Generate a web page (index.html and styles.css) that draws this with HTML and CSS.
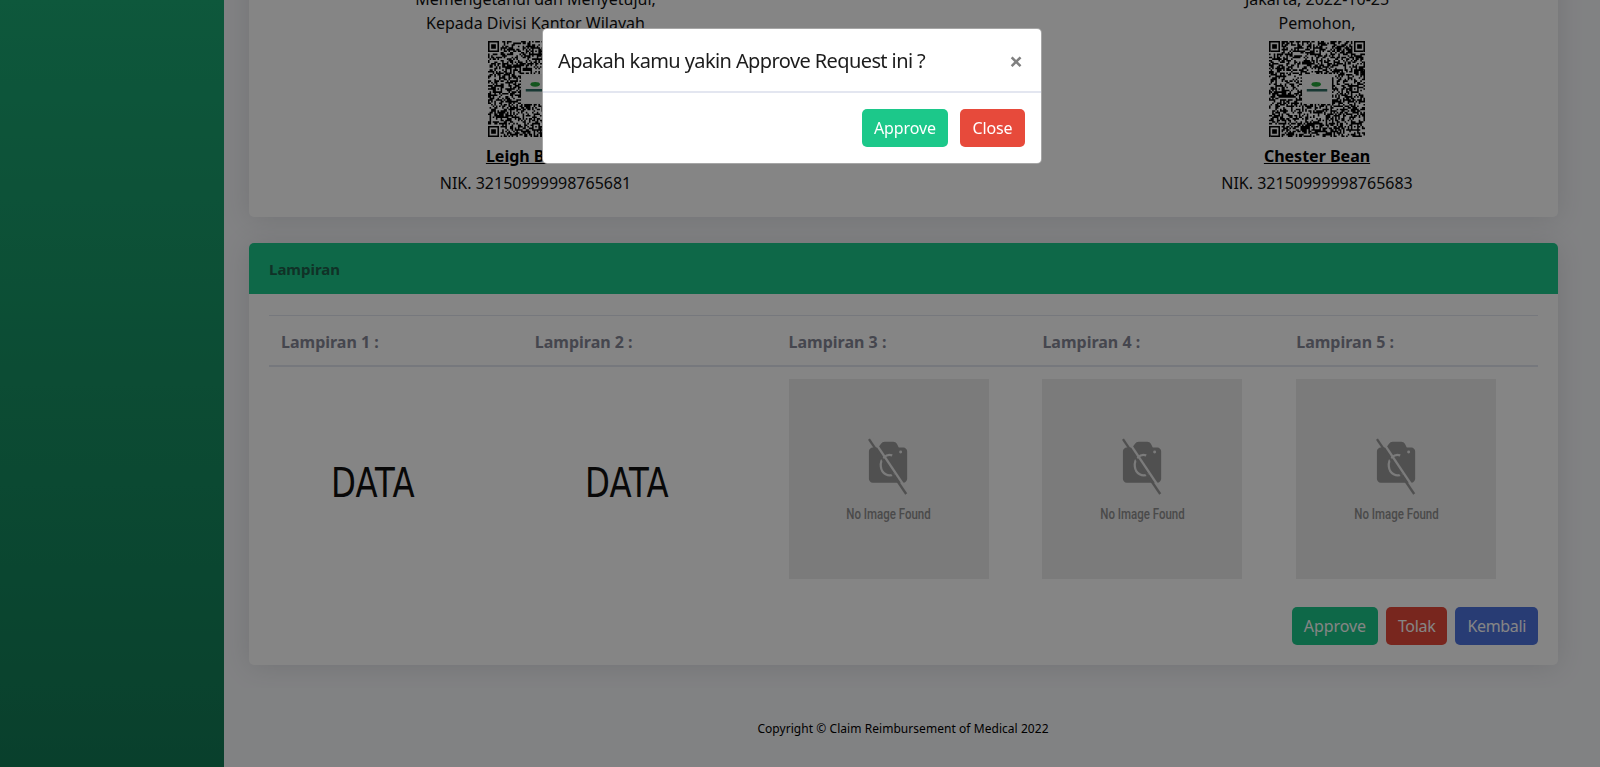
FILE: index.html
```html
<!DOCTYPE html>
<html lang="en">
  <head>
    <meta charset="UTF-8" />
    <meta name="viewport" content="width=device-width, initial-scale=1.0" />
    <link rel="stylesheet" href="styles.css">
    <title>Claim Reimbursement of Medical</title>
  </head>
  <body>
    <div class="layout">
      <aside class="sidebar"></aside>

      <div class="main">
        <div class="content">
          <section class="card">
            <div class="signatures">
              <div class="signer">
                <p>Memengetahui dan Menyetujui,</p>
                <p>Kepada Divisi Kantor Wilayah</p>
                <svg class="qr" data-seed="77"></svg>
                <p class="signer-name">Leigh Brown</p>
                <p class="signer-nik">NIK. 32150999998765681</p>
              </div>
              <div class="signer">
                <p>Jakarta, 2022-10-25</p>
                <p>Pemohon,</p>
                <svg class="qr" data-seed="4242"></svg>
                <p class="signer-name">Chester Bean</p>
                <p class="signer-nik">NIK. 32150999998765683</p>
              </div>
            </div>
          </section>

          <section class="card">
            <div class="card-header">Lampiran</div>
            <div class="card-body">
              <table class="attachments">
                <thead>
                  <tr>
                    <th>Lampiran 1 :</th>
                    <th>Lampiran 2 :</th>
                    <th>Lampiran 3 :</th>
                    <th>Lampiran 4 :</th>
                    <th>Lampiran 5 :</th>
                  </tr>
                </thead>
                <tbody>
                  <tr>
                    <td><div class="thumb"><span class="thumb-data">DATA</span></div></td>
                    <td><div class="thumb"><span class="thumb-data">DATA</span></div></td>
                    <td>
                      <div class="thumb thumb-empty">
                        <svg class="no-image-icon" viewBox="0 0 44 62"><use href="#no-image" /></svg>
                        <span class="no-image-text">No Image Found</span>
                      </div>
                    </td>
                    <td>
                      <div class="thumb thumb-empty">
                        <svg class="no-image-icon" viewBox="0 0 44 62"><use href="#no-image" /></svg>
                        <span class="no-image-text">No Image Found</span>
                      </div>
                    </td>
                    <td>
                      <div class="thumb thumb-empty">
                        <svg class="no-image-icon" viewBox="0 0 44 62"><use href="#no-image" /></svg>
                        <span class="no-image-text">No Image Found</span>
                      </div>
                    </td>
                  </tr>
                </tbody>
              </table>
              <div class="actions">
                <button class="btn btn-approve">Approve</button>
                <button class="btn btn-reject">Tolak</button>
                <button class="btn btn-back">Kembali</button>
              </div>
            </div>
          </section>
        </div>

        <footer class="footer">Copyright © Claim Reimbursement of Medical 2022</footer>
      </div>
    </div>

    <!-- approve dialog, open over a dimmed page -->
    <div class="backdrop">
      <div class="modal">
        <div class="modal-header">
          <h5 class="modal-title">Apakah kamu yakin Approve Request ini ?</h5>
          <span class="modal-close">×</span>
        </div>
        <div class="modal-footer">
          <button class="btn btn-approve">Approve</button>
          <button class="btn btn-reject">Close</button>
        </div>
      </div>
    </div>

    <svg class="icon-defs" width="0" height="0">
      <symbol id="no-image" viewBox="0 0 44 62">
        <path class="camera" d="M5 10h6l3-4c1-1 2-2 4-2h9c2 0 3 1 4 2l2 4h5c2 0 4 2 4 4v30c0 2-2 4-4 4H5c-2 0-4-2-4-4V14c0-2 2-4 4-4z" />
        <path class="camera-ring" d="M26 18.5a9.5 11 0 1 0 2 20" />
        <circle class="camera-lens" cx="35" cy="15" r="1.6" />
        <path class="camera-cut" d="M4.5 0 L44 59" />
        <path class="camera-slash" d="M1 1 L41 60" />
      </symbol>
    </svg>

    <script src="qr.js"></script>
  </body>
</html>
```

FILE: styles.css
```css
* {
  box-sizing: border-box;
}

html,
body {
  margin: 0;
  height: 767px;
  overflow: hidden;
}

body {
  font-family: "Noto Sans", Arial, sans-serif;
  font-size: 16px;
  line-height: 24px;
  color: #111;
  background-color: #f8f9fc;
}

p {
  margin: 0;
}

.layout {
  display: flex;
  height: 767px;
}

.sidebar {
  width: 224px;
  flex-shrink: 0;
  background-image: linear-gradient(180deg, #1ba973 0%, #137b55 100%);
}

.main {
  flex: 1;
  min-width: 0;
  padding-right: 18px;
  display: flex;
  flex-direction: column;
}

/* the page is scrolled down, first card starts above the window */
.content {
  height: 688px;
  flex-shrink: 0;
  overflow: hidden;
  padding: 0 24px 0 25px;
}

.card {
  background-color: #fff;
  border-radius: 5px;
  box-shadow: 0 2px 28px rgba(58, 59, 69, 0.15);
  margin-bottom: 26px;
}

.card:first-child {
  margin-top: -60px;
  padding: 47px 20px 22px;
}

.signatures {
  display: grid;
  grid-template-columns: 533px 1fr 442px;
}

.signer {
  display: flex;
  flex-direction: column;
  align-items: center;
  text-align: center;
}

.signer:last-child {
  grid-column: 3;
}

.qr {
  display: block;
  width: 96px;
  height: 96px;
  margin: 6px 0 7px;
}

.signer-name {
  font-weight: 700;
  text-decoration: underline;
  color: #000;
  margin-bottom: 3px;
}

.card-header {
  height: 51px;
  padding: 1px 20px 0;
  display: flex;
  align-items: center;
  background-color: #1cc88a;
  border-radius: 5px 5px 0 0;
  font-size: 15px;
  font-weight: 700;
  color: #20604c;
}

.card-body {
  padding: 21px 20px 20px;
}

.attachments {
  width: 100%;
  table-layout: fixed;
  border-collapse: collapse;
  margin-bottom: 16px;
}

.attachments th {
  height: 50px;
  padding: 14px 12px 10px;
  text-align: left;
  color: #858796;
  border-top: 1px solid #e3e6f0;
  border-bottom: 2px solid #e3e6f0;
}

.attachments td {
  padding: 12px;
}

.thumb {
  width: 200px;
  height: 200px;
  display: flex;
  flex-direction: column;
  align-items: center;
  justify-content: center;
}

.thumb-data {
  font-family: "DejaVu Sans", sans-serif;
  font-size: 41px;
  line-height: 44px;
  font-weight: 400;
  color: #111;
  margin: 8px 16px 0 0;
  transform: scaleX(0.79);
}

.thumb-empty {
  background-color: #ebebeb;
}

.no-image-icon {
  display: block;
  width: 41px;
  height: 60px;
  margin-top: 3px;
}

.no-image-text {
  font-family: Roboto, sans-serif;
  font-size: 14px;
  line-height: 18px;
  font-weight: 500;
  color: #8f8f8f;
  margin-top: 8px;
  transform: scaleX(0.82);
  white-space: nowrap;
}

.camera {
  fill: #999;
}

.camera-lens {
  fill: #ebebeb;
}

.camera-ring {
  stroke: #ebebeb;
  stroke-width: 2.4;
  fill: none;
}

.camera-cut {
  stroke: #ebebeb;
  stroke-width: 2.5;
  fill: none;
}

.camera-slash {
  stroke: #999;
  stroke-width: 2.5;
  fill: none;
}

.icon-defs {
  position: absolute;
}

.actions {
  display: flex;
  justify-content: flex-end;
  gap: 8px;
}

.btn {
  height: 38px;
  padding: 0 12px;
  border: 0;
  border-radius: 5px;
  font-family: inherit;
  font-size: 16px;
  letter-spacing: -0.1px;
  color: #fff;
}

.btn-approve {
  background-color: #1cc88a;
}

.btn-reject {
  background-color: #e74a3b;
}

.btn-back {
  background-color: #4e73df;
  letter-spacing: -0.35px;
}

.actions .btn-reject {
  letter-spacing: -0.3px;
}

.footer {
  flex: 1;
  display: flex;
  align-items: center;
  justify-content: center;
  padding-top: 2px;
  font-size: 12px;
  letter-spacing: 0.05px;
  color: #000;
}

.backdrop {
  position: fixed;
  top: 0;
  left: 0;
  right: 0;
  bottom: 0;
  padding: 28px 16px 0 0;
  display: flex;
  justify-content: center;
  align-items: flex-start;
  background-color: rgba(0, 0, 0, 0.48);
}

.modal {
  width: 500px;
  background-color: #fff;
  border: 1px solid rgba(0, 0, 0, 0.35);
  border-radius: 5px;
}

.modal-header {
  height: 64px;
  padding: 2px 16px 0 15px;
  display: flex;
  align-items: center;
  justify-content: space-between;
  border-bottom: 2px solid #e3e6f0;
}

.modal-title {
  margin: 0;
  font-size: 20px;
  font-weight: 400;
  line-height: 28px;
  letter-spacing: -0.6px;
  color: #1c1c1c;
}

.modal-close {
  font-size: 24px;
  font-weight: 700;
  line-height: 24px;
  color: #808080;
  margin-right: 2px;
}

.modal-footer {
  padding: 16px;
  display: flex;
  justify-content: flex-end;
  gap: 12px;
}

.modal-footer .btn-reject {
  padding: 0 12.5px;
}
```

FILE: qr.js
```javascript
// fake qr codes, only meant to look like the scanned ones
var SIZE = 61;
var NS = "http://www.w3.org/2000/svg";

function setCell(grid, x, y, value) {
  if (x >= 0 && y >= 0 && x < SIZE && y < SIZE) {
    grid[y][x] = value;
  }
}

function finder(grid, x, y) {
  for (var i = 0; i < 7; i++) {
    for (var j = 0; j < 7; j++) {
      var ring = i === 0 || i === 6 || j === 0 || j === 6;
      var core = i >= 2 && i <= 4 && j >= 2 && j <= 4;
      grid[y + i][x + j] = ring || core;
    }
  }
  // quiet border round the finder
  for (var k = -1; k < 8; k++) {
    setCell(grid, x + k, y - 1, false);
    setCell(grid, x + k, y + 7, false);
    setCell(grid, x - 1, y + k, false);
    setCell(grid, x + 7, y + k, false);
  }
}

function align(grid, x, y) {
  for (var i = 0; i < 5; i++) {
    for (var j = 0; j < 5; j++) {
      grid[y + i][x + j] = i === 0 || i === 4 || j === 0 || j === 4 || (i === 2 && j === 2);
    }
  }
}

function addShape(svg, name, attrs) {
  var el = document.createElementNS(NS, name);
  for (var key in attrs) {
    el.setAttribute(key, attrs[key]);
  }
  svg.appendChild(el);
}

function drawQr(svg) {
  var seed = parseInt(svg.getAttribute("data-seed"), 10);
  var grid = [];
  for (var y = 0; y < SIZE; y++) {
    grid.push([]);
    for (var x = 0; x < SIZE; x++) {
      seed = (seed * 1103515245 + 12345) % 2147483648;
      grid[y].push(seed / 2147483648 > 0.5);
    }
  }
  finder(grid, 0, 0);
  finder(grid, SIZE - 7, 0);
  finder(grid, 0, SIZE - 7);
  align(grid, 52, 52);
  align(grid, 52, 28);
  align(grid, 28, 52);
  align(grid, 4, 28);
  align(grid, 28, 4);

  var d = "";
  for (var r = 0; r < SIZE; r++) {
    for (var c = 0; c < SIZE; c++) {
      if (grid[r][c]) {
        d += "M" + c + " " + r + "h1v1h-1z";
      }
    }
  }
  svg.setAttribute("viewBox", "0 0 " + SIZE + " " + SIZE);
  addShape(svg, "path", { d: d, fill: "#000" });

  // logo patch in the middle
  addShape(svg, "rect", { x: 21, y: 21, width: 19, height: 19, fill: "#f4f4f4" });
  addShape(svg, "ellipse", { cx: 30, cy: 27.5, rx: 3, ry: 1.5, fill: "#25a33a" });
  addShape(svg, "rect", { x: 24, y: 30.5, width: 13, height: 1.6, fill: "#2c6b62" });
}

var codes = document.querySelectorAll(".qr");
for (var n = 0; n < codes.length; n++) {
  drawQr(codes[n]);
}
```
